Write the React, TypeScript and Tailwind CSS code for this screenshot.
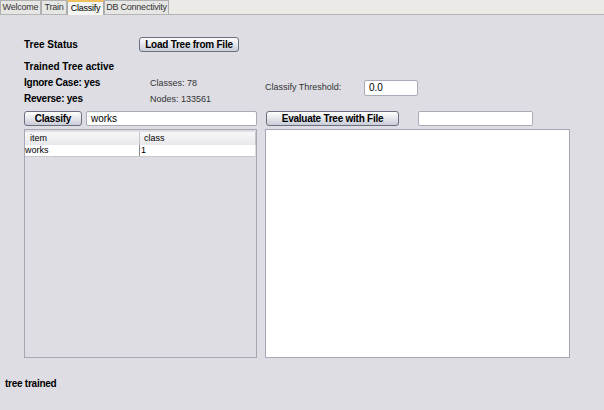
import React from "react"

const btn =
    "h-[15px] rounded-[3px] border border-[#6b7080] bg-gradient-to-b from-white to-[#c9cdd8] text-[10px] font-bold text-black leading-none flex items-center justify-center whitespace-nowrap tracking-tight"
const field = "h-[15px] bg-white border border-[#a8acb8] rounded-[2px] text-[10px] leading-none flex items-center px-[4px] whitespace-nowrap"

function Tab({ label, active, w }: { label: string; active?: boolean; w: string }) {
    return (
        <div
            className={
                active
                    ? `${w} h-[15px] bg-[#f4f4f2] border-t-2 border-t-[#f0c060] border-x border-x-[#a8a8a8] flex items-center justify-center text-[9px] tracking-tight whitespace-nowrap -mb-px`
                    : `${w} h-[14px] bg-[#e6e6e4] border border-[#b0b0b0] border-b-0 flex items-center justify-center text-[9px] tracking-tight whitespace-nowrap text-[#333]`
            }
        >
            {label}
        </div>
    )
}

export default function App() {
    return (
        <div className="w-[604px] h-[410px] bg-[#dddde3] text-black overflow-hidden" style={{ fontFamily: '"Liberation Sans", Arial, sans-serif' }}>
            {/* tabs */}
            <div className="h-[15px] flex items-end border-b border-[#b4b4b4] bg-[#eceae6]">
                <Tab label="Welcome" w="w-[41px]" />
                <Tab label="Train" w="w-[26px]" />
                <Tab label="Classify" w="w-[37px]" active />
                <Tab label="DB Connectivity" w="w-[65px]" />
            </div>

            <div className="pl-[24px] pt-[22px] text-[10px] whitespace-nowrap">
                <div className="flex items-center h-[15px]">
                    <div className="w-[115px] font-bold">Tree Status</div>
                    <button className={`${btn} w-[100px]`}>Load Tree from File</button>
                </div>

                <div className="mt-[9px] h-[12px] font-bold leading-[12px]">Trained Tree active</div>

                <div className="flex mt-[4px]">
                    <div className="w-[126px] flex flex-col gap-[4px] font-bold leading-[12px] tracking-tight">
                        <div>Ignore Case: yes</div>
                        <div>Reverse: yes</div>
                    </div>
                    <div className="w-[115px] flex flex-col gap-[4px] text-[9px] leading-[12px] text-[#333]">
                        <div>Classes: 78</div>
                        <div>Nodes: 133561</div>
                    </div>
                    <div className="flex items-center h-[16px] mt-[3px]">
                        <div className="w-[99px] text-[9px] text-[#333]">Classify Threshold:</div>
                        <div className={`${field} w-[54px] h-[16px] text-[9px]`}>0.0</div>
                    </div>
                </div>

                <div className="flex mt-[6px] h-[15px]">
                    <button className={`${btn} w-[58px]`}>Classify</button>
                    <div className={`${field} w-[171px] ml-[4px]`}>works</div>
                    <button className={`${btn} w-[133px] ml-[9px]`}>Evaluate Tree with File</button>
                    <div className={`${field} w-[115px] ml-[19px]`}></div>
                </div>

                <div className="flex mt-[3px]">
                    <div className="w-[233px] h-[229px] border border-[#a4a8b4] bg-[#dddde3] pt-[2px]">
                        <div className="flex h-[13px] text-[9px] leading-none">
                            <div className="w-[115px] flex items-center pl-[5px] border-r border-[#c4c4c8] bg-gradient-to-b from-[#f8f8f8] to-[#e8e8ec]">item</div>
                            <div className="flex-1 flex items-center pl-[4px] bg-gradient-to-b from-[#f8f8f8] to-[#e8e8ec] border-r border-[#c4c4c8]">class</div>
                        </div>
                        <div className="flex h-[12px] text-[9px] leading-none bg-white border-b border-[#c8c8cc] mr-px">
                            <div className="w-[115px] flex items-center border-r border-[#888]">works</div>
                            <div className="flex-1 flex items-center pl-[1px]">1</div>
                        </div>
                    </div>
                    <div className="w-[305px] h-[229px] ml-[8px] bg-white border border-[#a4a8b4]"></div>
                </div>
            </div>

            <div className="pl-[5px] mt-[18px] text-[10px] font-bold tracking-tight">tree trained</div>
        </div>
    )
}
